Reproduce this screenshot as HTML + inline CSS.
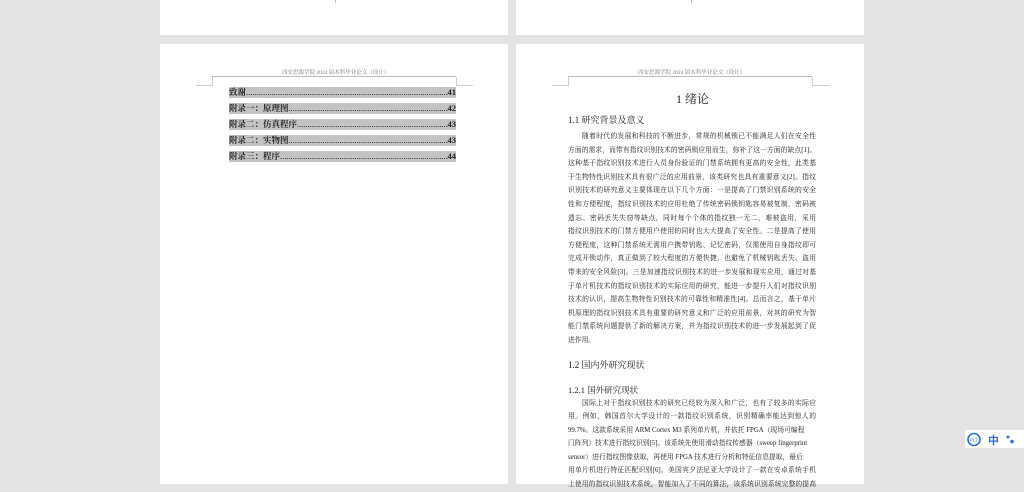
<!DOCTYPE html><html><head><meta charset="utf-8"><style>
body{margin:0;width:1024px;height:483px;background:#e3e3e3;position:relative;overflow:hidden;font-family:"Liberation Serif","Noto Serif CJK SC",serif;color:#222}
.pg{position:absolute;background:#fff}
.hd{position:absolute;font-size:5.5px;color:#777;white-space:nowrap}
.hl{position:absolute;border-top:1px solid #bbb;height:0}
.ck{position:absolute;border:1px solid #ccc;border-top:none;width:16px;height:8px}
.toc{position:absolute;left:229px;width:227px;height:11px;background:#c3c3c3;font-size:8.5px;line-height:11px;display:flex;font-weight:bold}
.toc .d{flex:1;overflow:hidden;white-space:nowrap;font-weight:normal}
.ln{position:absolute;left:568px;width:248px;font-size:6.8px;line-height:12px;white-space:nowrap;text-align:justify;text-align-last:justify;overflow:hidden;height:13px}
.h{position:absolute;white-space:nowrap}
</style></head><body>
<div class="pg" style="left:160px;top:0;width:348px;height:35px"></div>
<div class="pg" style="left:516px;top:0;width:348px;height:35px"></div>
<div style="position:absolute;left:335px;top:0;width:1px;height:3px;background:#bbb"></div>
<div style="position:absolute;left:691px;top:0;width:1px;height:3px;background:#bbb"></div>
<div class="pg" style="left:160px;top:44px;width:348px;height:440px"></div>
<div class="pg" style="left:516px;top:44px;width:348px;height:440px"></div>

<div class="hd" style="left:282px;top:68px">西安思源学院 2024 届本科毕业论文（设计）</div>
<div class="hl" style="left:212px;top:76px;width:244px"></div>
<div class="ck" style="left:196px;top:77px;border-left:none"></div>
<div class="ck" style="left:456px;top:77px;border-right:none"></div>

<div class="toc" style="top:87px"><span>致谢</span><span class="d">.......................................................................................................................</span><span>41</span></div>
<div class="toc" style="top:103px"><span>附录一：原理图</span><span class="d">.......................................................................................................................</span><span>42</span></div>
<div class="toc" style="top:119px"><span>附录二：仿真程序</span><span class="d">.......................................................................................................................</span><span>43</span></div>
<div class="toc" style="top:135px"><span>附录二：实物图</span><span class="d">.......................................................................................................................</span><span>43</span></div>
<div class="toc" style="top:151px"><span>附录三：程序</span><span class="d">.......................................................................................................................</span><span>44</span></div>

<div class="hd" style="left:638px;top:68px">西安思源学院 2024 届本科毕业论文（设计）</div>
<div class="hl" style="left:568px;top:76px;width:244px"></div>
<div class="ck" style="left:552px;top:77px;border-left:none"></div>
<div class="ck" style="left:812px;top:77px;border-right:none"></div>

<div class="h" style="left:676px;top:90px;font-size:12px">1 绪论</div>
<div class="h" style="left:568px;top:113px;font-size:9px">1.1 研究背景及意义</div>
<div class="ln" style="top:131px;left:582px;width:234px">随着时代的发展和科技的不断进步，常规的机械锁已不能满足人们在安全性</div>
<div class="ln" style="top:145px">方面的需求，而带有指纹识别技术的密码锁应用而生，弥补了这一方面的缺点[1]。</div>
<div class="ln" style="top:158px">这种基于指纹识别技术进行人员身份验证的门禁系统拥有更高的安全性，此类基</div>
<div class="ln" style="top:172px">于生物特性识别技术具有很广泛的应用前景，该类研究也具有重要意义[2]。指纹</div>
<div class="ln" style="top:185px">识别技术的研究意义主要体现在以下几个方面：一是提高了门禁识别系统的安全</div>
<div class="ln" style="top:199px">性和方便程度，指纹识别技术的应用杜绝了传统密码锁钥匙容易被复制、密码被</div>
<div class="ln" style="top:213px">遗忘、密码丢失失窃等缺点，同时每个个体的指纹独一无二，难被盗用，采用</div>
<div class="ln" style="top:226px">指纹识别技术的门禁方便用户使用的同时也大大提高了安全性。二是提高了使用</div>
<div class="ln" style="top:240px">方便程度，这种门禁系统无需用户携带钥匙、记忆密码，仅需使用自身指纹即可</div>
<div class="ln" style="top:253px">完成开锁动作，真正做到了较大程度的方便快捷，也避免了机械钥匙丢失、盗用</div>
<div class="ln" style="top:267px">带来的安全风险[3]。三是加速指纹识别技术的进一步发展和现实应用，通过对基</div>
<div class="ln" style="top:281px">于单片机技术的指纹识别技术的实际应用的研究，能进一步提升人们对指纹识别</div>
<div class="ln" style="top:294px">技术的认识，提高生物特性识别技术的可靠性和精准性[4]。总而言之，基于单片</div>
<div class="ln" style="top:308px">机原理的指纹识别技术具有重要的研究意义和广泛的应用前景，对其的研究为智</div>
<div class="ln" style="top:321px">能门禁系统问题提供了新的解决方案，并为指纹识别技术的进一步发展起到了促</div>
<div class="ln" style="top:335px;text-align-last:left">进作用。</div>

<div class="h" style="left:568px;top:358px;font-size:9px">1.2 国内外研究现状</div>
<div class="h" style="left:568px;top:384px;font-size:8.5px">1.2.1 国外研究现状</div>
<div class="ln" style="top:398px;left:582px;width:234px">国际上对于指纹识别技术的研究已经较为深入和广泛，也有了较多的实际应</div>
<div class="ln" style="top:411px">用。例如，韩国首尔大学设计的一款指纹识别系统，识别精确率能达到惊人的</div>
<div class="ln" style="top:425px;text-align-last:left">99.7%。这款系统采用 ARM Cortex M3 系列单片机，并依托 FPGA（现场可编程</div>
<div class="ln" style="top:438px;text-align-last:left">门阵列）技术进行指纹识别[5]。该系统先使用滑动指纹传感器（sweep fingerprint</div>
<div class="ln" style="top:452px;text-align-last:left">sensor）进行指纹图像获取，再使用 FPGA 技术进行分析和特征信息提取，最后</div>
<div class="ln" style="top:465px">用单片机进行特征匹配识别[6]。美国宾夕法尼亚大学设计了一款在安卓系统手机</div>
<div class="ln" style="top:479px">上使用的指纹识别技术系统，智能加入了不同的算法，该系统识别系统完整的提高</div>

<div style="position:absolute;left:965px;top:430px;width:59px;height:18px;background:#fff"></div>
<svg style="position:absolute;left:967px;top:432px" width="56" height="15" viewBox="0 0 56 15">
<circle cx="7" cy="7.5" r="6" fill="none" stroke="#2b6fd6" stroke-width="1.6"/>
<text x="7" y="9.5" font-size="4.5" fill="#2b6fd6" text-anchor="middle" font-family="Liberation Sans">PLT</text>
<text x="21" y="12" font-size="11" fill="#2b6fd6" font-family="Noto Sans CJK SC,sans-serif" font-weight="bold">中</text>
<circle cx="41" cy="5" r="1.5" fill="#2b6fd6"/>
<circle cx="45" cy="9.5" r="1.8" fill="#2b6fd6"/>
</svg>
</body></html>
